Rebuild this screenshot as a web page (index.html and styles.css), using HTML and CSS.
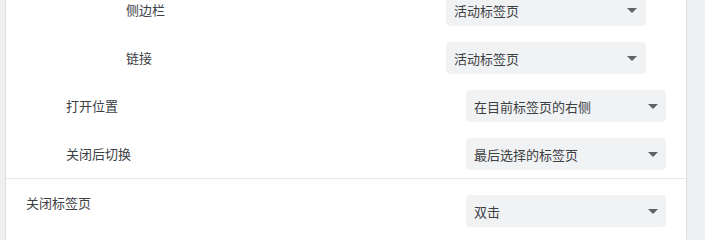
FILE: index.html
```html
<!DOCTYPE html>
<html lang="zh-CN">
<head>
<meta charset="utf-8">
<link rel="stylesheet" href="styles.css">
</head>
<body>
<div class="page">
  <div class="card">
    <div class="row level2">
      <span class="label">侧边栏</span>
      <div class="select"><span>活动标签页</span><i class="arrow"></i></div>
    </div>
    <div class="row level2">
      <span class="label">链接</span>
      <div class="select"><span>活动标签页</span><i class="arrow"></i></div>
    </div>
    <div class="row level1">
      <span class="label">打开位置</span>
      <div class="select"><span>在目前标签页的右侧</span><i class="arrow"></i></div>
    </div>
    <div class="row level1">
      <span class="label">关闭后切换</span>
      <div class="select"><span>最后选择的标签页</span><i class="arrow"></i></div>
    </div>
    <div class="sep"></div>
    <div class="row top">
      <span class="label">关闭标签页</span>
      <div class="select"><span>双击</span><i class="arrow"></i></div>
    </div>
  </div>
</div>
</body>
</html>
```

FILE: styles.css
```css
html, body {
  margin: 0;
  padding: 0;
  height: 100%;
  overflow: hidden;
  background: #eff0f2;
}
.page {
  height: 100%;
  padding: 0 19px 0 6px;
  font-family: "Noto Sans CJK SC", "Noto Sans", sans-serif;
  font-size: 13px;
  color: #3c4043;
}
.card {
  background: #ffffff;
  margin-top: -14px;
  min-height: calc(100% + 14px);
  box-shadow: 0 0 2px rgba(0,0,0,0.18);
}
.row {
  display: flex;
  align-items: center;
  justify-content: space-between;
  height: 48px;
  box-sizing: border-box;
}
.level2 { padding: 0 40px 0 120px; }
.level1 { padding: 0 20px 0 60px; }
.row.top {
  padding: 16px 20px 0 20px;
  align-items: flex-start;
}
.label {
  line-height: 20px;
}
.row.top .label { line-height: 16px; }
.select {
  width: 200px;
  height: 32px;
  flex-shrink: 0;
  box-sizing: border-box;
  background: #f1f2f4;
  border-radius: 4px;
  display: flex;
  align-items: center;
  justify-content: space-between;
  padding: 0 8px 0 8px;
  color: #3c4043;
}
.level2 .select { padding-right: 9px; }
.arrow {
  width: 0;
  height: 0;
  border-left: 5px solid transparent;
  border-right: 5px solid transparent;
  border-top: 5px solid #5f6368;
}
.sep {
  height: 1px;
  background: #e8e9ec;
}
```
